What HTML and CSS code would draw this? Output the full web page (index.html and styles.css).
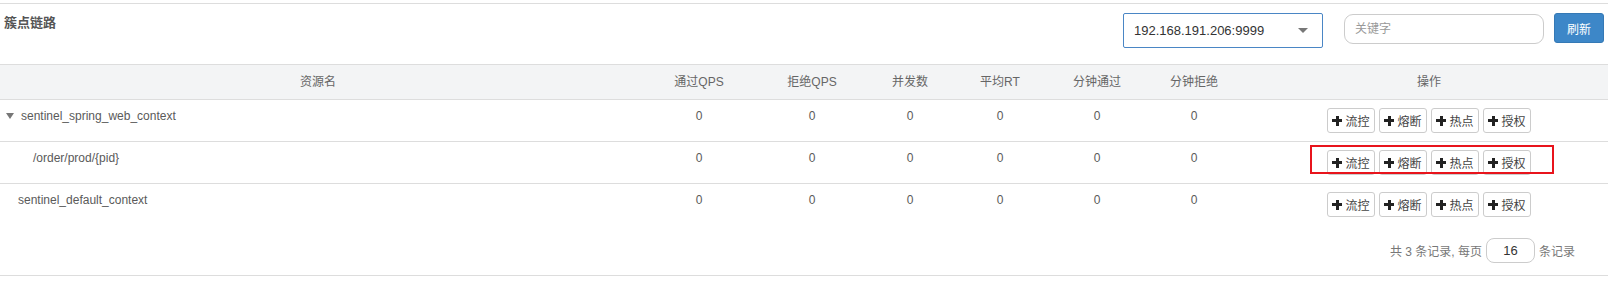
FILE: index.html
```html
<!DOCTYPE html>
<html lang="zh-CN">
<head>
  <meta charset="UTF-8">
  <title>簇点链路</title>
  <link rel="stylesheet" href="styles.css">
</head>
<body>
  <div class="panel">
    <div class="panel-head">
      <h3 class="title">簇点链路</h3>
      <div class="tools">
        <div class="machine-select">
          <span>192.168.191.206:9999</span>
          <span class="caret"></span>
        </div>
        <input class="search" type="text" placeholder="关键字">
        <button class="btn-refresh">刷新</button>
      </div>
    </div>

    <div class="table">
      <div class="row head">
        <div class="cell">资源名</div>
        <div class="cell">通过QPS</div>
        <div class="cell">拒绝QPS</div>
        <div class="cell">并发数</div>
        <div class="cell">平均RT</div>
        <div class="cell">分钟通过</div>
        <div class="cell">分钟拒绝</div>
        <div class="cell ops">操作</div>
      </div>

      <div class="row">
        <div class="cell name"><span class="tree-caret"></span>sentinel_spring_web_context</div>
        <div class="cell">0</div>
        <div class="cell">0</div>
        <div class="cell">0</div>
        <div class="cell">0</div>
        <div class="cell">0</div>
        <div class="cell">0</div>
        <div class="cell ops">
          <button class="btn-op"><i class="plus"></i>流控</button>
          <button class="btn-op"><i class="plus"></i>熔断</button>
          <button class="btn-op"><i class="plus"></i>热点</button>
          <button class="btn-op"><i class="plus"></i>授权</button>
        </div>
      </div>

      <div class="row">
        <div class="cell name child">/order/prod/{pid}</div>
        <div class="cell">0</div>
        <div class="cell">0</div>
        <div class="cell">0</div>
        <div class="cell">0</div>
        <div class="cell">0</div>
        <div class="cell">0</div>
        <div class="cell ops">
          <div class="highlight"></div>
          <button class="btn-op"><i class="plus"></i>流控</button>
          <button class="btn-op"><i class="plus"></i>熔断</button>
          <button class="btn-op"><i class="plus"></i>热点</button>
          <button class="btn-op"><i class="plus"></i>授权</button>
        </div>
      </div>

      <div class="row last">
        <div class="cell name root">sentinel_default_context</div>
        <div class="cell">0</div>
        <div class="cell">0</div>
        <div class="cell">0</div>
        <div class="cell">0</div>
        <div class="cell">0</div>
        <div class="cell">0</div>
        <div class="cell ops">
          <button class="btn-op"><i class="plus"></i>流控</button>
          <button class="btn-op"><i class="plus"></i>熔断</button>
          <button class="btn-op"><i class="plus"></i>热点</button>
          <button class="btn-op"><i class="plus"></i>授权</button>
        </div>
      </div>
    </div>

    <div class="pager">
      <span>共 3 条记录, 每页</span>
      <input class="page-size" type="text" value="16">
      <span>条记录</span>
    </div>
  </div>
</body>
</html>
```

FILE: styles.css
```css
* {
  margin: 0;
  padding: 0;
  box-sizing: border-box;
}

body {
  font-family: 'Liberation Sans', 'Noto Sans CJK SC', sans-serif;
  font-size: 12px;
  color: #5a5a5a;
  background: #fff;
}

.panel {
  margin-top: 3px;
  border-top: 1px solid #ddd;
}

.panel-head {
  height: 61px;
  border-bottom: 1px solid #ddd;
  display: flex;
  justify-content: space-between;
  align-items: flex-start;
}

.title {
  font-size: 13px;
  font-weight: 600;
  color: #555;
  line-height: 18px;
  padding: 10px 0 0 4px;
}

.tools {
  display: flex;
  align-items: flex-start;
  padding: 9px 4px 0 0;
}

.machine-select {
  width: 200px;
  height: 35px;
  border: 1px solid #4a86c5;
  border-radius: 2px;
  display: flex;
  align-items: center;
  justify-content: space-between;
  padding: 0 14px 0 10px;
  font-size: 13px;
  color: #333;
}

.caret {
  width: 0;
  height: 0;
  border-left: 5px solid transparent;
  border-right: 5px solid transparent;
  border-top: 5px solid #777;
}

.search {
  width: 200px;
  height: 30px;
  margin: 1px 0 0 21px;
  border: 1px solid #ccc;
  border-radius: 9px;
  padding: 0 10px;
  font-family: inherit;
  font-size: 12px;
  outline: none;
}

.search::placeholder {
  color: #999;
}

.btn-refresh {
  width: 50px;
  height: 30px;
  margin-left: 10px;
  background: #3d87c8;
  border: 1px solid #3579b5;
  border-radius: 3px;
  color: #fff;
  font-family: inherit;
  font-size: 12px;
}

.table {
  display: flex;
  flex-direction: column;
}

.row {
  display: grid;
  grid-template-columns: 636px 126px 100px 96px 84px 110px 84px 1fr;
  height: 42px;
  border-bottom: 1px solid #ddd;
}

.row.last {
  border-bottom: none;
}

.row.head {
  height: 35px;
  background: #f3f4f5;
  color: #666;
}

.cell {
  text-align: center;
  padding-top: 8px;
  line-height: 17px;
}

.head .cell {
  padding-top: 0;
  line-height: 34px;
}

.cell.name {
  text-align: left;
  padding-left: 21px;
}

.cell.child {
  padding-left: 33px;
}

.cell.root {
  padding-left: 18px;
}

.tree-caret {
  display: inline-block;
  width: 0;
  height: 0;
  margin: 0 7px 1px -15px;
  border-left: 4px solid transparent;
  border-right: 4px solid transparent;
  border-top: 6px solid #777;
}

.cell.ops {
  position: relative;
  display: flex;
  justify-content: center;
  align-items: flex-start;
  gap: 4px;
  padding-left: 14px;
}

.head .cell.ops {
  display: block;
}

.btn-op {
  width: 48px;
  height: 25px;
  display: flex;
  align-items: center;
  justify-content: center;
  gap: 3px;
  background: #fff;
  border: 1px solid #ccc;
  border-radius: 3px;
  font-family: inherit;
  font-size: 12px;
  color: #444;
}

.plus {
  width: 10px;
  height: 10px;
  background:
    linear-gradient(#222, #222) center / 10px 3px no-repeat,
    linear-gradient(#222, #222) center / 3px 10px no-repeat;
}

.highlight {
  position: absolute;
  left: 74px;
  top: 3px;
  width: 244px;
  height: 29px;
  border: 2px solid #e8141c;
  pointer-events: none;
}

.pager {
  height: 50px;
  border-bottom: 1px solid #ddd;
  display: flex;
  justify-content: flex-end;
  align-items: center;
  gap: 4px;
  padding: 0 33px 0 0;
  color: #777;
}

.page-size {
  width: 49px;
  height: 25px;
  border: 1px solid #ccc;
  border-radius: 8px;
  text-align: center;
  font-family: inherit;
  font-size: 13px;
  color: #333;
  outline: none;
}
```
